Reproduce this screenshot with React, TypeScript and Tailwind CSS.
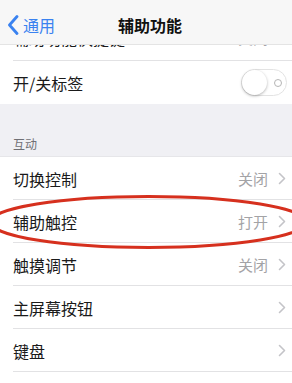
import React from "react";

const font = { fontFamily: '"Noto Sans CJK SC", "Noto Sans", sans-serif' };

interface RowProps {
  label: string;
  value?: string;
  last?: boolean;
}

const Chevron = () => (
  <svg width="8" height="13" viewBox="0 0 8 13" className="ml-[10px]">
    <path d="M1.5 1.5 L6.5 6.5 L1.5 11.5" fill="none" stroke="#c4c4c8" strokeWidth="1.6" strokeLinecap="round" strokeLinejoin="round" />
  </svg>
);

const Row: React.FC<RowProps> = ({ label, value, last }) => (
  <div className="h-[43px] flex items-center pl-[13px] relative bg-white">
    <span className="text-[16px] text-[#1a1a1a] flex-1 leading-none">{label}</span>
    {value && <span className="text-[15px] text-[#a3a3a6] leading-none">{value}</span>}
    <div className="pr-[6px] flex items-center">
      <Chevron />
    </div>
    {!last && <div className="absolute bottom-0 left-[13px] right-0 h-px bg-[#e2e2e4]" />}
  </div>
);

export default function App() {
  return (
    <div className="w-[292px] h-[383px] overflow-hidden relative bg-white" style={font}>
      {/* nav bar */}
      <div className="h-[45px] bg-[#f7f7f7] flex items-center relative border-b border-[#e4e4e4] z-10">
        <div className="flex items-center pl-[7px] pt-[5px] text-[#3a82f0]">
          <svg width="12" height="20" viewBox="0 0 12 20">
            <path d="M10 1.5 L2.5 10 L10 18.5" fill="none" stroke="#3a82f0" strokeWidth="2.8" strokeLinecap="round" strokeLinejoin="round" />
          </svg>
          <span className="ml-[4px] text-[16px] leading-none">通用</span>
        </div>
        <div className="absolute left-0 right-0 top-[5px] bottom-0 flex items-center justify-center pointer-events-none">
          <span className="text-[16px] font-semibold text-[#111] leading-none ml-[8px]">辅助功能</span>
        </div>
      </div>

      {/* partially scrolled row */}
      <div className="h-[16px] overflow-hidden relative">
        <div className="h-[43px] -mt-[29px] flex items-center pl-[13px] pr-[6px]">
          <span className="text-[16px] text-[#1a1a1a] flex-1 leading-none">辅助功能快捷键</span>
          <span className="text-[15px] text-[#a3a3a6] leading-none">关闭</span>
          <Chevron />
        </div>
        <div className="absolute bottom-0 left-[13px] right-0 h-px bg-[#e2e2e4]" />
      </div>

      {/* toggle row */}
      <div className="h-[43px] flex items-center pl-[13px] pr-[5px]">
        <span className="text-[16px] text-[#1a1a1a] flex-1 leading-none">开/关标签</span>
        <div className="w-[46px] h-[27px] rounded-full border border-[#e3e3e3] bg-white relative flex items-center">
          <div className="w-[25px] h-[25px] rounded-full bg-white shadow-[0_1px_3px_rgba(0,0,0,0.3)]" />
          <div className="ml-[7px] w-[8px] h-[8px] rounded-full border border-[#b5b5b5]" />
        </div>
      </div>

      {/* section header */}
      <div className="h-[53px] bg-[#f0f0f4] flex items-end pl-[13px] pb-[6px] border-b border-[#e6e6e9]">
        <span className="text-[12px] text-[#6f6f74] leading-none">互动</span>
      </div>

      <Row label="切换控制" value="关闭" />
      <Row label="辅助触控" value="打开" />
      <Row label="触摸调节" value="关闭" />
      <Row label="主屏幕按钮" />
      <Row label="键盘" />

      {/* red annotation ellipse */}
      <svg className="absolute left-0 top-0 pointer-events-none z-20" width="292" height="383">
        <ellipse cx="148.5" cy="222" rx="158" ry="25.5" fill="none" stroke="#d6301e" strokeWidth="3" />
      </svg>
    </div>
  );
}
